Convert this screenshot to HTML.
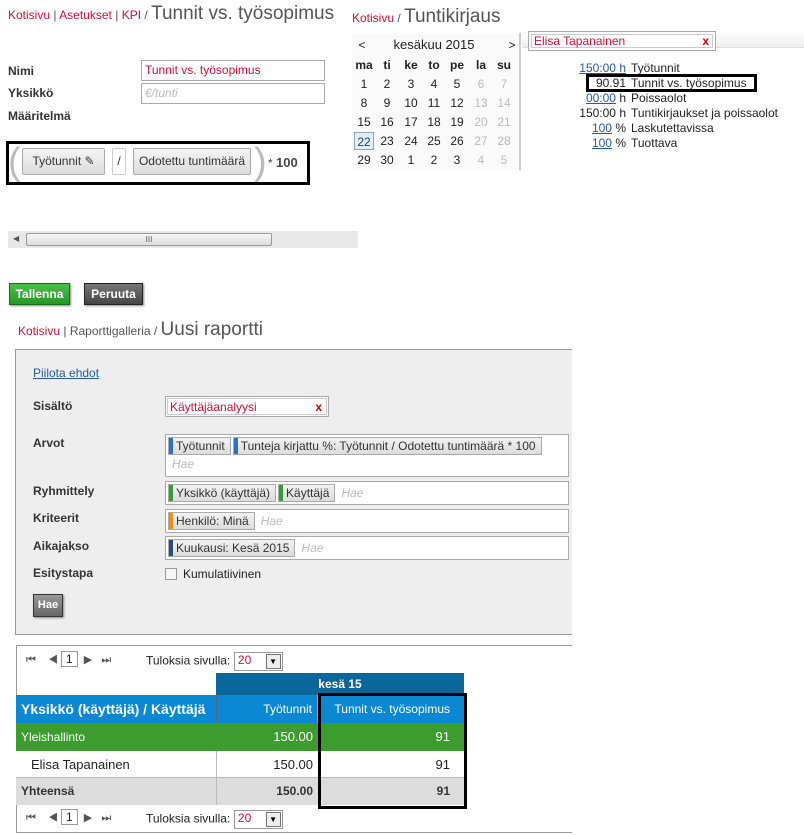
<!DOCTYPE html>
<html><head><meta charset="utf-8"><style>
*{box-sizing:border-box;margin:0;padding:0}
body{width:804px;height:835px;background:#fff;font-family:"Liberation Sans",Arial,sans-serif;font-size:12px;color:#222;position:relative;overflow:hidden}
.a{position:absolute;white-space:nowrap}
.red{color:#d0103a}
.gr{color:#555}
.t{font-size:19px;color:#555}
.lb{font-weight:bold;font-size:12px;color:#333}
.inp{position:absolute;border:1px solid #aaa;background:#fff;padding:2px 3px;font-size:12px}
.btn{position:absolute;border:1px solid #aaa;background:linear-gradient(#f4f4f4,#dcdcdc);border-radius:2px;font-size:12px;text-align:center;padding-top:5px;color:#333}
.tag{display:inline-block;border:1px solid #aaa;background:linear-gradient(#f2f2f2,#dcdcdc);padding:1px 5px 1px 7px;margin:2px 0 0 2px;position:relative;font-size:12px;color:#333}
.tag:before{content:"";position:absolute;left:0;top:0;bottom:0;width:4px}
.b:before{background:#2a73c2}.g:before{background:#3a9a3a}.o:before{background:#f0900a}.n:before{background:#2c4a7a}
.hae{color:#bbb;font-style:italic;margin-left:6px}
.cal span{position:absolute;width:20px;text-align:center;font-size:12px}
.mut{color:#bbb}
.num a{color:#2a5aa0;text-decoration:underline}
</style></head><body>

<div class="a" style="left:8px;top:3px;font-size:12px"><span class="red">Kotisivu</span> <span class="gr">|</span> <span class="red">Asetukset</span> <span class="gr">|</span> <span class="red">KPI</span> <span class="gr">/</span> <span class="t">Tunnit vs. työsopimus</span></div>

<div class="a lb" style="left:8px;top:64px">Nimi</div>
<div class="a lb" style="left:8px;top:86px">Yksikkö</div>
<div class="a lb" style="left:8px;top:109px">Määritelmä</div>
<div class="inp red" style="left:141px;top:60px;width:184px;height:21px">Tunnit vs. työsopimus</div>
<div class="inp" style="left:141px;top:83px;width:184px;height:21px;color:#bbb;font-style:italic">€/tunti</div>

<div class="a" style="left:6px;top:141px;width:304px;height:44px;border:3px solid #000"></div>
<div class="a" style="left:8px;top:140px;font-size:38px;color:#bbb;line-height:44px">(</div>
<div class="btn" style="left:22px;top:148px;width:83px;height:27px">Työtunnit ✎</div>
<div class="btn" style="left:112px;top:148px;width:14px;height:27px;background:#fff;border-color:#ccc">/</div>
<div class="btn" style="left:133px;top:148px;width:118px;height:27px">Odotettu tuntimäärä</div>
<div class="a" style="left:254px;top:140px;font-size:38px;color:#bbb;line-height:44px">)</div>
<div class="a" style="left:268px;top:155px;font-size:12px;color:#444">* <b style="font-size:13px">100</b></div>

<div class="a" style="left:8px;top:231px;width:350px;height:17px;background:#e8e8e8"></div>
<div class="a" style="left:13px;top:234px;font-size:8px;color:#555">◀</div>
<div class="a" style="left:26px;top:233px;width:246px;height:13px;border:1px solid #999;background:linear-gradient(#f6f6f6,#dcdcdc);border-radius:2px;text-align:center;font-size:8px;line-height:11px;color:#555">III</div>

<div class="a" style="left:9px;top:283px;width:61px;height:22px;background:linear-gradient(#4cc04c,#229922);border:1px solid #1a6a1a;color:#fff;font-weight:bold;text-align:center;line-height:20px;box-shadow:1px 1px 2px #888">Tallenna</div>
<div class="a" style="left:84px;top:283px;width:59px;height:22px;background:linear-gradient(#777,#444);border:1px solid #222;color:#fff;font-weight:bold;text-align:center;line-height:20px;box-shadow:1px 1px 2px #888">Peruuta</div>

<!-- right -->
<div class="a" style="left:352px;top:6px"><span class="red">Kotisivu</span> <span class="gr">/</span> <span class="t">Tuntikirjaus</span></div>
<div class="a cal" style="left:352px;top:33px;width:169px;height:137px;border-right:2px solid #ccc;background:#fafafa">
<span style="left:0;top:5px">&lt;</span><span style="left:22px;top:4px;width:120px;font-size:13px">kesäkuu 2015</span><span style="left:150px;top:5px">&gt;</span>
<span style="left:2px;top:25px;font-weight:bold;width:20px">ma</span><span style="left:25px;top:25px;font-weight:bold">ti</span><span style="left:49px;top:25px;font-weight:bold">ke</span><span style="left:72px;top:25px;font-weight:bold">to</span><span style="left:95px;top:25px;font-weight:bold">pe</span><span style="left:119px;top:25px;font-weight:bold">la</span><span style="left:142px;top:25px;font-weight:bold">su</span>
<span style="left:2px;top:44px">1</span><span style="left:25px;top:44px">2</span><span style="left:49px;top:44px">3</span><span style="left:72px;top:44px">4</span><span style="left:95px;top:44px">5</span><span class="mut" style="left:119px;top:44px">6</span><span class="mut" style="left:142px;top:44px">7</span>
<span style="left:2px;top:63px">8</span><span style="left:25px;top:63px">9</span><span style="left:49px;top:63px">10</span><span style="left:72px;top:63px">11</span><span style="left:95px;top:63px">12</span><span class="mut" style="left:119px;top:63px">13</span><span class="mut" style="left:142px;top:63px">14</span>
<span style="left:2px;top:82px">15</span><span style="left:25px;top:82px">16</span><span style="left:49px;top:82px">17</span><span style="left:72px;top:82px">18</span><span style="left:95px;top:82px">19</span><span class="mut" style="left:119px;top:82px">20</span><span class="mut" style="left:142px;top:82px">21</span>
<span style="left:2px;top:99px;border:1px solid #8ab;background:#e4eef8;height:18px;padding-top:2px;color:#246">22</span><span style="left:25px;top:101px">23</span><span style="left:49px;top:101px">24</span><span style="left:72px;top:101px">25</span><span style="left:95px;top:101px">26</span><span class="mut" style="left:119px;top:101px">27</span><span class="mut" style="left:142px;top:101px">28</span>
<span style="left:2px;top:120px">29</span><span style="left:25px;top:120px">30</span><span style="left:49px;top:120px">1</span><span style="left:72px;top:120px">2</span><span style="left:95px;top:120px">3</span><span class="mut" style="left:119px;top:120px">4</span><span class="mut" style="left:142px;top:120px">5</span>
</div>
<div class="a" style="left:522px;top:31px;width:282px;height:17px;background:linear-gradient(#fff,#eee);border-bottom:1px solid #ddd"></div>
<div class="a" style="left:528px;top:31px;width:188px;height:20px;border:1px solid #aaa;background:#fff;padding:2px"><div style="border:1px solid #ccc;height:14px;font-size:12px;line-height:12px;padding-left:2px" class="red">Elisa Tapanainen<span style="position:absolute;right:6px;top:3px;font-weight:bold;color:#c00">x</span></div></div>
<div class="a num" style="left:560px;top:61px;width:240px;font-size:12px;line-height:15px">
<div style="display:flex"><div style="width:66px;text-align:right"><a>150:00 h</a></div><div style="padding-left:5px">Työtunnit</div></div>
<div style="display:flex"><div style="width:66px;text-align:right">90.91</div><div style="padding-left:5px">Tunnit vs. työsopimus</div></div>
<div style="display:flex"><div style="width:66px;text-align:right"><a>00:00</a> h</div><div style="padding-left:5px">Poissaolot</div></div>
<div style="display:flex"><div style="width:66px;text-align:right">150:00 h</div><div style="padding-left:5px">Tuntikirjaukset ja poissaolot</div></div>
<div style="display:flex"><div style="width:66px;text-align:right"><a>100</a> %</div><div style="padding-left:5px">Laskutettavissa</div></div>
<div style="display:flex"><div style="width:66px;text-align:right"><a>100</a> %</div><div style="padding-left:5px">Tuottava</div></div>
</div>
<div class="a" style="left:586px;top:74px;width:171px;height:18px;border:3px solid #000"></div>

<!-- report -->
<div class="a" style="left:18px;top:319px"><span class="red">Kotisivu</span> <span class="gr">| Raporttigalleria /</span> <span class="t">Uusi raportti</span></div>
<div class="a" style="left:15px;top:349px;width:557px;height:286px;background:#eee;border:1px solid #999;border-right:none"></div>
<div class="a" style="left:33px;top:366px;color:#2a5aa0;text-decoration:underline">Piilota ehdot</div>
<div class="a lb" style="left:33px;top:399px">Sisältö</div>
<div class="a lb" style="left:33px;top:436px">Arvot</div>
<div class="a lb" style="left:33px;top:484px">Ryhmittely</div>
<div class="a lb" style="left:33px;top:511px">Kriteerit</div>
<div class="a lb" style="left:33px;top:539px">Aikajakso</div>
<div class="a lb" style="left:33px;top:566px">Esitystapa</div>
<div class="a" style="left:165px;top:396px;width:164px;height:21px;border:1px solid #aaa;background:#fff;padding:1px"><div class="red" style="border:1px solid #ccc;height:17px;padding:1px 2px">Käyttäjäanalyysi<span style="position:absolute;right:6px;top:3px;font-weight:bold;color:#c00">x</span></div></div>
<div class="a" style="left:165px;top:434px;width:404px;height:43px;border:1px solid #aaa;background:#fff"><span class="tag b">Työtunnit</span><span class="tag b" style="margin-left:2px">Tunteja kirjattu %: Työtunnit / Odotettu tuntimäärä * 100</span><br><span class="hae" style="line-height:18px">Hae</span></div>
<div class="a" style="left:165px;top:481px;width:404px;height:24px;border:1px solid #aaa;background:#fff"><span class="tag g">Yksikkö (käyttäjä)</span><span class="tag g">Käyttäjä</span><span class="hae">Hae</span></div>
<div class="a" style="left:165px;top:509px;width:404px;height:24px;border:1px solid #aaa;background:#fff"><span class="tag o">Henkilö: Minä</span><span class="hae">Hae</span></div>
<div class="a" style="left:165px;top:536px;width:404px;height:24px;border:1px solid #aaa;background:#fff"><span class="tag n">Kuukausi: Kesä 2015</span><span class="hae">Hae</span></div>
<div class="a" style="left:165px;top:568px;width:12px;height:12px;border:1px solid #999;background:#f6f6f6"></div>
<div class="a" style="left:183px;top:567px">Kumulatiivinen</div>
<div class="a" style="left:33px;top:594px;width:30px;height:23px;background:linear-gradient(#999,#666);border:1px solid #333;color:#fff;font-weight:bold;font-size:11px;text-align:center;line-height:21px;box-shadow:1px 1px 2px #888">Hae</div>

<!-- table -->
<div class="a" style="left:16px;top:645px;width:556px;height:188px;border:1px solid #999;border-right:none"></div>
<div class="a" style="left:26px;top:652px;font-size:11px;color:#555">⏮&nbsp;&nbsp;&nbsp; ◀ <span style="border:1px solid #999;padding:0 4px;font-size:12px;color:#222">1</span> &nbsp;▶ &nbsp;&nbsp;⏭</div>
<div class="a" style="left:146px;top:652px">Tuloksia sivulla: <span style="display:inline-block;border:1px solid #999;width:49px;height:19px;vertical-align:middle;position:relative" class="red">&nbsp;20<span style="position:absolute;right:1px;top:1px;width:15px;height:15px;border:1px solid #777;background:#eee;color:#000;font-size:8px;text-align:center;line-height:14px">▼</span></span></div>
<div class="a" style="left:216px;top:673px;width:248px;height:22px;background:#0b6699;color:#fff;font-weight:bold;text-align:center;line-height:22px">kesä 15</div>
<div class="a" style="left:16px;top:695px;width:448px;height:28px;background:#0a88d4;color:#fff"></div>
<div class="a" style="left:21px;top:701px;color:#fff;font-weight:bold;font-size:14px">Yksikkö (käyttäjä) / Käyttäjä</div>
<div class="a" style="left:216px;top:695px;width:1px;height:110px;background:#567"></div>
<div class="a" style="left:317px;top:695px;width:1px;height:110px;background:#7ab"></div>
<div class="a" style="left:216px;top:702px;width:96px;text-align:right;color:#fff">Työtunnit</div>
<div class="a" style="left:317px;top:702px;width:133px;text-align:right;color:#fff">Tunnit vs. työsopimus</div>
<div class="a" style="left:16px;top:723px;width:448px;height:28px;background:#3c9c2e;color:#fff;line-height:28px;padding-left:5px">Yleishallinto</div>
<div class="a" style="left:216px;top:729px;width:97px;text-align:right;color:#fff;font-size:13px">150.00</div>
<div class="a" style="left:317px;top:729px;width:133px;text-align:right;color:#fff;font-size:13px">91</div>
<div class="a" style="left:16px;top:751px;width:448px;height:27px;background:#fff;border-bottom:1px solid #bbb;line-height:27px;padding-left:15px;font-size:13px">Elisa Tapanainen</div>
<div class="a" style="left:216px;top:757px;width:97px;text-align:right;font-size:13px">150.00</div>
<div class="a" style="left:317px;top:757px;width:133px;text-align:right;font-size:13px">91</div>
<div class="a" style="left:16px;top:778px;width:448px;height:27px;background:#dcdcdc;line-height:27px;padding-left:5px;font-weight:bold;color:#333">Yhteensä</div>
<div class="a" style="left:216px;top:784px;width:97px;text-align:right;font-weight:bold;color:#333">150.00</div>
<div class="a" style="left:317px;top:784px;width:133px;text-align:right;font-weight:bold;color:#333">91</div>
<div class="a" style="left:216px;top:751px;width:1px;height:54px;background:#bbb"></div>
<div class="a" style="left:318px;top:693px;width:149px;height:116px;border:3px solid #000"></div>
<div class="a" style="left:26px;top:810px;font-size:11px;color:#555">⏮&nbsp;&nbsp;&nbsp; ◀ <span style="border:1px solid #999;padding:0 4px;font-size:12px;color:#222">1</span> &nbsp;▶ &nbsp;&nbsp;⏭</div>
<div class="a" style="left:146px;top:810px">Tuloksia sivulla: <span style="display:inline-block;border:1px solid #999;width:49px;height:19px;vertical-align:middle;position:relative" class="red">&nbsp;20<span style="position:absolute;right:1px;top:1px;width:15px;height:15px;border:1px solid #777;background:#eee;color:#000;font-size:8px;text-align:center;line-height:14px">▼</span></span></div>
</body></html>
